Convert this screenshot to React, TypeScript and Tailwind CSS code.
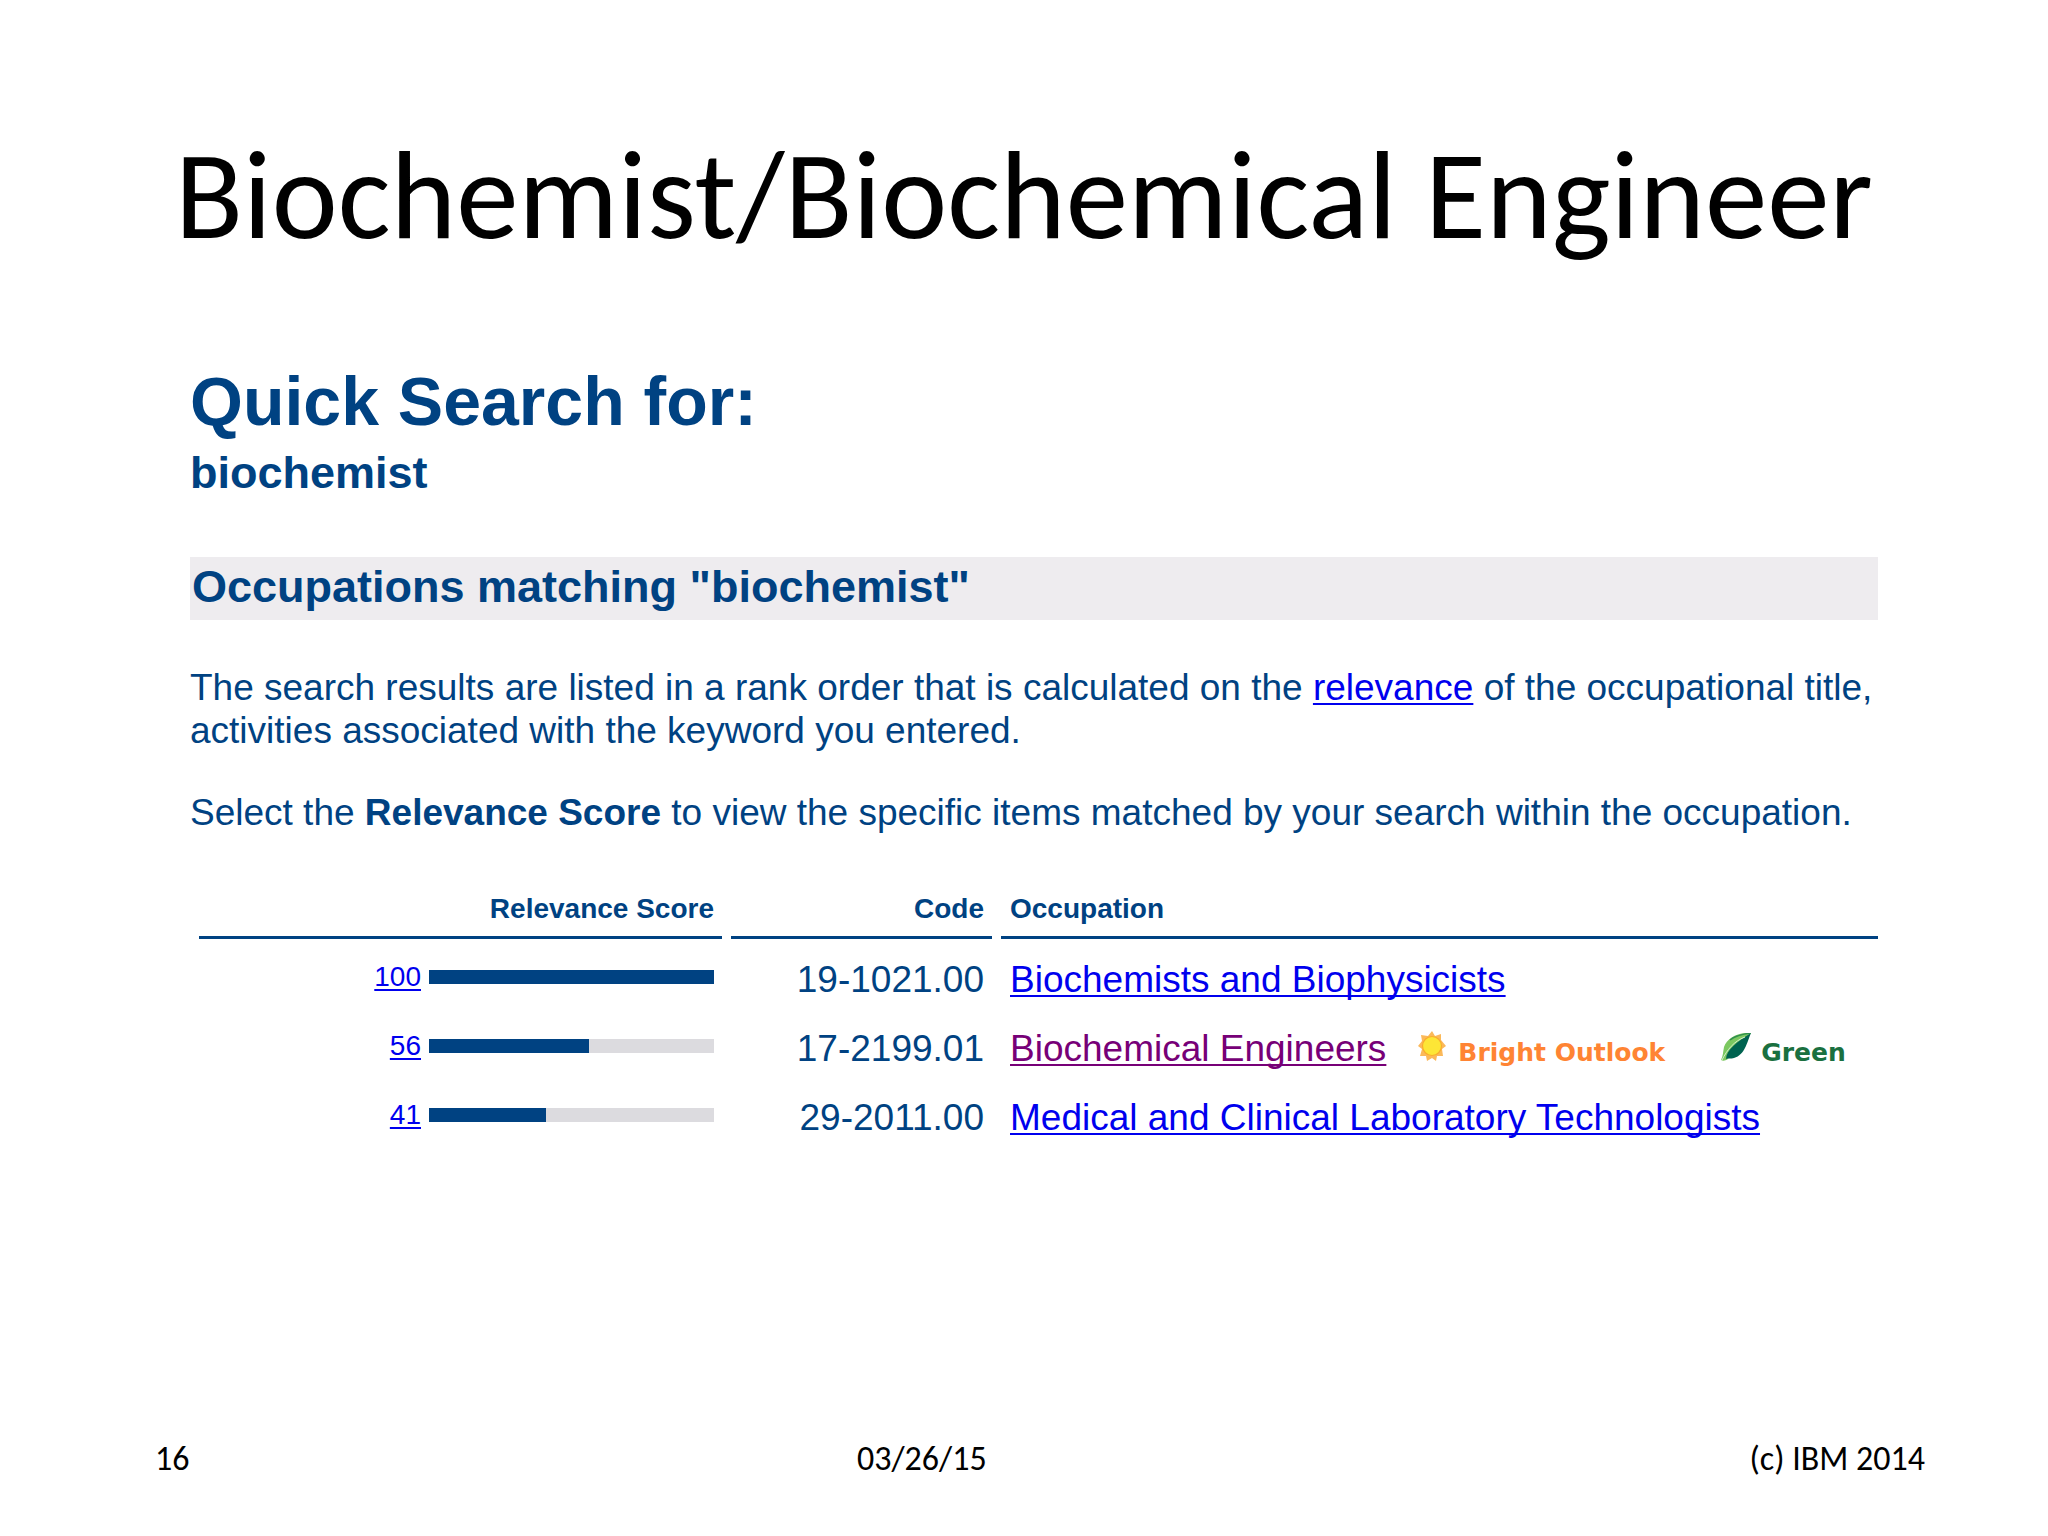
import React from 'react'

interface Occupation {
    score: number
    code: string
    title: string
    visited?: boolean
    bright?: boolean
    green?: boolean
}

const OCCUPATIONS: Occupation[] = [
    { score: 100, code: '19-1021.00', title: 'Biochemists and Biophysicists' },
    { score: 56, code: '17-2199.01', title: 'Biochemical Engineers', visited: true, bright: true, green: true },
    { score: 41, code: '29-2011.00', title: 'Medical and Clinical Laboratory Technologists' },
]

const LINK = 'underline decoration-2 underline-offset-[3px] [text-decoration-skip-ink:none]'
const TAG = "flex items-baseline font-['DejaVu_Sans',sans-serif] text-[25px] leading-[30px] font-bold"

function SunIcon() {
    return (
        <svg width="28" height="30" viewBox="0 0 28 30" aria-hidden="true">
            <path
                d="M14 0l3 5 6-2 0 6 5 6-4 3 1 7-6 0-1 5-4-3-5 3-1-5-6 0 2-7-4-3 4-5-1-6 7 1z"
                fill="#fbb95a"
            />
            <circle cx="14" cy="15" r="9.5" fill="#fde636" stroke="#f9ad2c" strokeWidth="1.2" />
        </svg>
    )
}

function LeafIcon() {
    return (
        <svg width="30" height="28" viewBox="0 0 30 28" aria-hidden="true">
            <path d="M30 0C17-1 6 5 3 14c-1 5-1 9-3 13 2 1 4 1 7-1L20 8z" fill="#7cc860" />
            <path d="M30 0C26 9 24 22 13 25c-3 1-6 0-8 1 0-9 11-17 25-26z" fill="#006350" />
            <path d="M1 27C6 17 13 8 24 4" fill="none" stroke="#d5efcf" strokeWidth="1" />
            <path d="M30 0C22 1 14 3 9 7" fill="none" stroke="#2f8f4e" strokeWidth="1.5" />
        </svg>
    )
}

function ScoreBar({ score }: { score: number }) {
    return (
        <div className="flex h-[62px] items-center justify-end gap-2 pr-2">
            <a href="#score" className={`text-[28px] leading-8 text-[#0000ee] ${LINK}`}>
                {score}
            </a>
            <div className="h-3.5 w-[285px] bg-[#dcdbdf]">
                <div className="h-full bg-[#004282]" style={{ width: `${score}%` }} />
            </div>
        </div>
    )
}

function OccupationRow({ item }: { item: Occupation }) {
    return (
        <tr className="align-top">
            <td className="p-0">
                <ScoreBar score={item.score} />
            </td>
            <td className="p-0 pt-[7px] pr-2 text-right">{item.code}</td>
            <td className="p-0 pt-[7px] pl-[9px]">
                <div className="flex items-baseline whitespace-nowrap">
                    <a href="#occupation" className={`${item.visited ? 'text-[#770077]' : 'text-[#0000ee]'} ${LINK}`}>
                        {item.title}
                    </a>
                    {item.bright && (
                        <span className={`ml-8 gap-3 text-[#ff8433] ${TAG}`}>
                            <SunIcon />
                            Bright Outlook
                        </span>
                    )}
                    {item.green && (
                        <span className={`ml-[56px] gap-[10px] text-[#1a7040] ${TAG}`}>
                            <LeafIcon />
                            Green
                        </span>
                    )}
                </div>
            </td>
        </tr>
    )
}

export default function App() {
    return (
        <div className="flex min-h-screen flex-col bg-white font-['Carlito','Lato',sans-serif] text-black">
            <h1 className="pt-[116px] text-center text-[125px] leading-[160px]">Biochemist/Biochemical Engineer</h1>

            <main className="mt-[85px] pr-[170px] pl-[190px] font-['Liberation_Sans',Arial,sans-serif] text-[37px] leading-[43px] text-[#004282]">
                <h2 className="text-[68px] leading-[80px] font-bold">Quick Search for:</h2>
                <p className="mt-[6px] text-[45px] leading-[52px] font-bold">biochemist</p>

                <h3 className="mt-[58px] bg-[#eeecef] pb-[3px] pl-0.5 text-[45px] leading-[60px] font-bold">
                    Occupations matching "biochemist"
                </h3>

                <p className="mt-[46px]">
                    The search results are listed in a rank order that is calculated on the{' '}
                    <a href="#relevance" className={`text-[#0000ee] ${LINK}`}>
                        relevance
                    </a>{' '}
                    of the occupational title,
                    <br />
                    activities associated with the keyword you entered.
                </p>
                <p className="mt-[39px]">
                    Select the <b>Relevance Score</b> to view the specific items matched by your search within the
                    occupation.
                </p>

                <table className="mt-[51px] w-[calc(100%+9px)] table-fixed border-separate border-spacing-x-[9px] border-spacing-y-[7px] leading-[54px]">
                    <thead className="text-[28px] leading-[34px]">
                        <tr>
                            <th className="w-[523px] border-b-[3px] border-[#004282] p-0 pr-2 pb-2.5 text-right">
                                Relevance Score
                            </th>
                            <th className="w-[261px] border-b-[3px] border-[#004282] p-0 pr-2 pb-2.5 text-right">
                                Code
                            </th>
                            <th className="border-b-[3px] border-[#004282] p-0 pb-2.5 pl-[9px] text-left">
                                Occupation
                            </th>
                        </tr>
                    </thead>
                    <tbody>
                        {OCCUPATIONS.map(item => (
                            <OccupationRow key={item.code} item={item} />
                        ))}
                    </tbody>
                </table>
            </main>

            <footer className="mt-auto grid grid-cols-[702px_1fr_auto] pr-[123px] pb-[57px] pl-[155px] text-[34px] leading-[40px]">
                <span>16</span>
                <span>03/26/15</span>
                <span>(c) IBM 2014</span>
            </footer>
        </div>
    )
}
